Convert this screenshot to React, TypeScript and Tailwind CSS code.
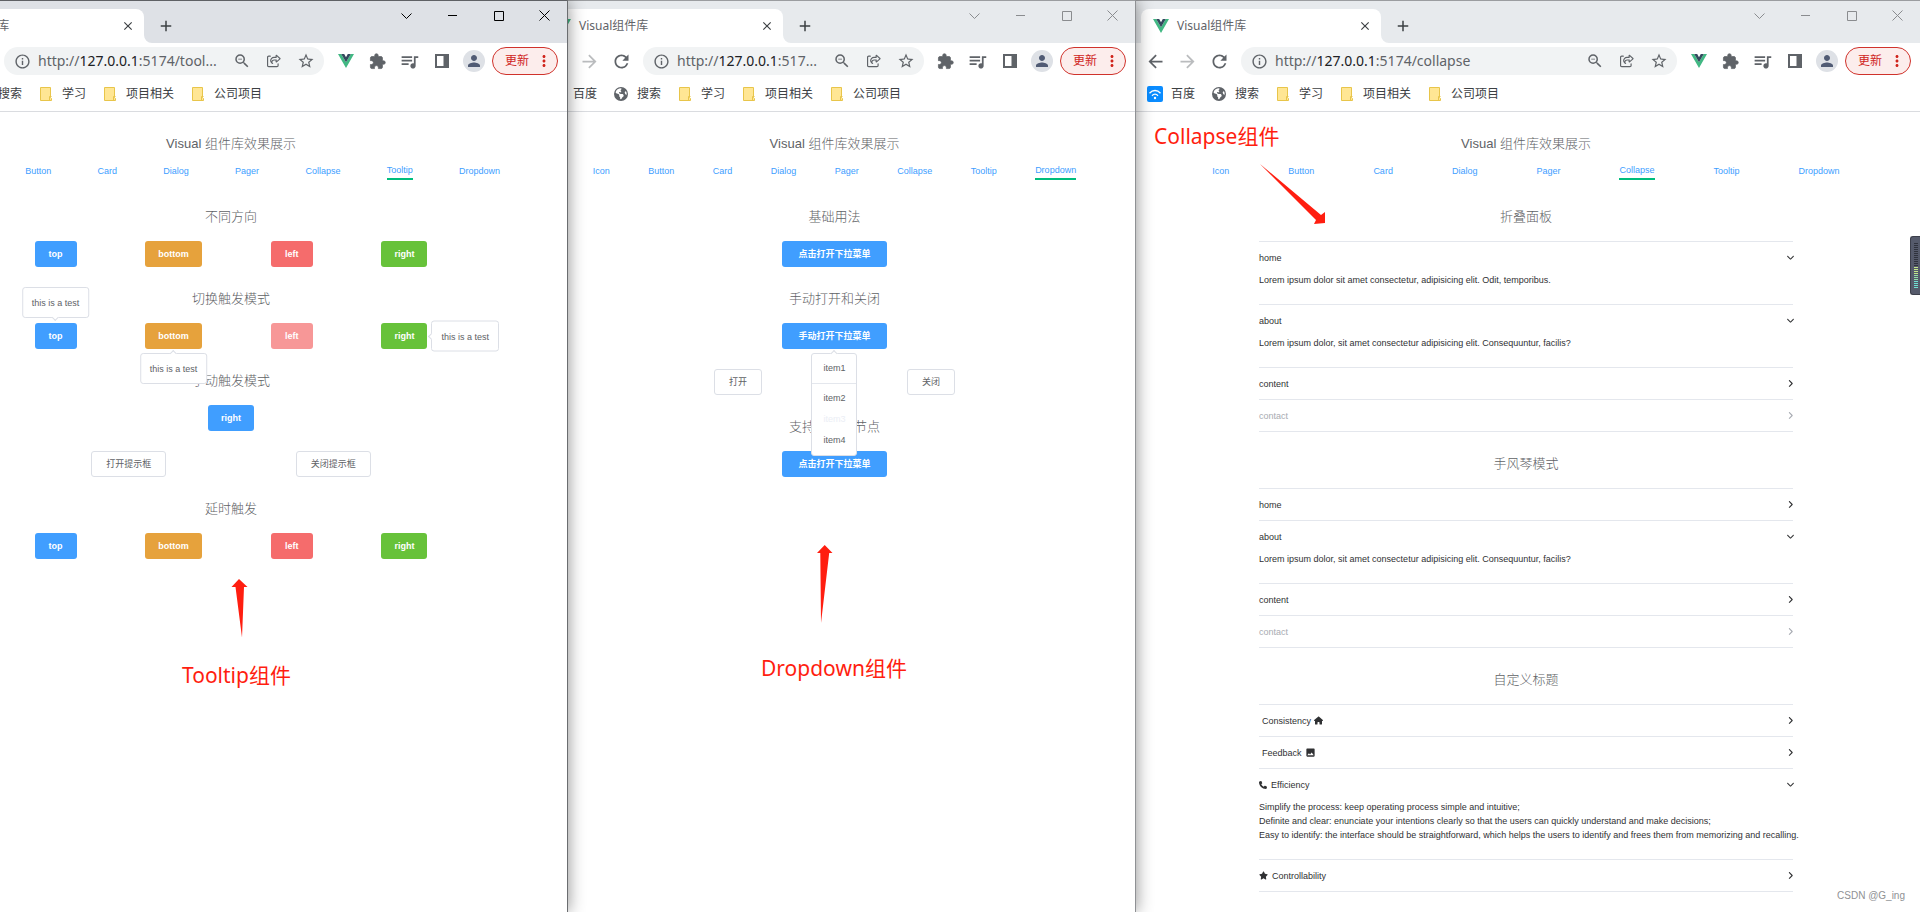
import { useState } from 'react';
import type { ReactNode } from 'react';
import clsx from 'clsx';
import {
  MdArrowBack,
  MdArrowForward,
  MdRefresh,
  MdInfoOutline,
  MdStarBorder,
  MdOutlineZoomOut,
  MdQueueMusic,
  MdPerson,
  MdMoreVert,
  MdClose,
  MdAdd,
  MdImage,
} from 'react-icons/md';
import { FaRegShareFromSquare, FaEarthAmericas, FaHouse, FaPhone, FaStar, FaAngleRight } from 'react-icons/fa6';

const NAV_ITEMS = ['Icon', 'Button', 'Card', 'Dialog', 'Pager', 'Collapse', 'Tooltip', 'Dropdown'];

/* ---------- Icons ---------- */

function VueLogo() {
  return (
    <svg width="16" height="14" viewBox="0 0 16 14" className="shrink-0" aria-hidden="true">
      <path d="M0 0h3.2L8 8.3 12.8 0H16L8 14z" fill="#41b883" />
      <path d="M3.2 0h3L8 3.2 9.8 0h3L8 8.3z" fill="#34495e" />
    </svg>
  );
}

function FolderIcon() {
  return (
    <svg width="16" height="16" viewBox="0 0 16 16" aria-hidden="true">
      <path d="M2.5 1.5h10v10l1 1v2h-11z" fill="#ffe694" stroke="#e8c54a" />
      <path d="M11.5 14v-3.5h2" fill="none" stroke="#e8c54a" />
    </svg>
  );
}

function WifiIcon() {
  return (
    <svg width="16" height="16" viewBox="0 0 16 16" aria-hidden="true">
      <rect width="16" height="16" rx="2" fill="#0a8cff" />
      <path d="M2.5 7.2c3.2-3.6 7.8-3.6 11 0M5 9.7c1.8-2 4.2-2 6 0" fill="none" stroke="#fff" strokeWidth="1.3" />
      <circle cx="8" cy="12" r="1.2" fill="#fff" />
    </svg>
  );
}

function PuzzleIcon() {
  return (
    <svg width="17" height="17" viewBox="0 0 24 24" fill="currentColor" stroke="currentColor" aria-hidden="true">
      <path d="M20.5 11H19V7c0-1.1-.9-2-2-2h-4V3.5a2.5 2.5 0 0 0-5 0V5H4c-1.1 0-1.99.9-1.99 2v3.8H3.5c1.49 0 2.7 1.21 2.7 2.7s-1.21 2.7-2.7 2.7H2V20c0 1.1.9 2 2 2h3.8v-1.5c0-1.49 1.21-2.7 2.7-2.7s2.7 1.21 2.7 2.7V22H17c1.1 0 2-.9 2-2v-4h1.5a2.5 2.5 0 0 0 0-5z" />
    </svg>
  );
}

function SidePanelIcon() {
  return (
    <svg width="14" height="14" viewBox="0 0 14 14" aria-hidden="true">
      <path d="M0 0h14v14H0zM2 2v10h6.5V2z" fill="#5f6368" fillRule="evenodd" />
    </svg>
  );
}

/* ---------- Browser window ---------- */

interface BrowserWindowProps {
  active?: boolean;
  path: string;
  vueExtension?: boolean;
  className: string;
  innerClassName?: string;
  overlay?: ReactNode;
  children: ReactNode;
}

function IconButton({ label, children }: { label: string; children: ReactNode }) {
  return (
    <button type="button" aria-label={label} className="flex h-7 w-8 shrink-0 items-center justify-center">
      {children}
    </button>
  );
}

function WindowControls({ active }: { active?: boolean }) {
  const paths = [
    { label: 'Tab search', d: 'M2.5 5.5l5 5 5-5' },
    { label: 'Minimize', d: 'M3 7.5h9' },
    { label: 'Maximize', d: 'M3.5 3.5h9v9h-9z' },
    { label: 'Close', d: 'M2.5 2.5l10 10M12.5 2.5l-10 10' },
  ];
  return (
    <div className={clsx('flex', active ? 'text-black' : 'text-[#8a8c8f]')}>
      {paths.map(({ label, d }) => (
        <button key={label} type="button" aria-label={label} className="flex h-7 w-[46px] items-center justify-center">
          <svg width="15" height="15" viewBox="0 0 15 15" fill="none" stroke="currentColor">
            <path d={d} />
          </svg>
        </button>
      ))}
    </div>
  );
}

function BrowserWindow({ active, path, vueExtension, className, innerClassName, overlay, children }: BrowserWindowProps) {
  return (
    <section className={clsx('relative min-w-0 shadow-[0_0_16px_rgba(0,0,0,0.45)]', className)}>
      <div
        className={clsx(
          'flex h-full overflow-hidden border-t bg-white',
          active ? 'border-t-[#5f6165]' : 'border-t-[#9b9da0]'
        )}
      >
        <div className={clsx('min-w-0 flex-1', innerClassName)}>
          {/* Tab strip */}
          <div className={clsx('flex h-[42px] justify-between pl-[5px]', active ? 'bg-[#dee1e6]' : 'bg-[#e7eaed]')}>
            <div className="flex items-end">
              <div className="relative flex h-[34px] w-60 items-center rounded-t-lg bg-white pr-2 pl-3">
                <VueLogo />
                <span className="ml-2 flex-1 text-xs text-[#5f6368]">Visual组件库</span>
                <button type="button" aria-label="Close tab" className="flex size-4 items-center justify-center text-[#3c4043]">
                  <MdClose size={14} />
                </button>
                <svg className="absolute bottom-0 left-full" width="8" height="8" viewBox="0 0 8 8" aria-hidden="true">
                  <path d="M0 0v8h8a8 8 0 0 1-8-8z" fill="#fff" />
                </svg>
              </div>
              <button type="button" aria-label="New tab" className="ml-3 flex h-[34px] w-5 items-center justify-center text-[#3c4043]">
                <MdAdd size={18} />
              </button>
            </div>
            <WindowControls active={active} />
          </div>

          {/* Toolbar */}
          <div className="flex h-9 items-center pr-[9px] pl-[3px] text-[#5f6368]">
            <IconButton label="Back">
              <MdArrowBack size={21} />
            </IconButton>
            <IconButton label="Forward">
              <MdArrowForward size={21} className="text-[#babcbe]" />
            </IconButton>
            <IconButton label="Reload">
              <MdRefresh size={21} />
            </IconButton>
            <div className="mx-1.5 flex h-7 min-w-0 flex-1 items-center rounded-full bg-[#f1f3f4] pr-0.5 pl-2.5">
              <MdInfoOutline size={17} className="shrink-0" />
              <span className="ml-[7px] min-w-0 flex-1 overflow-hidden text-sm whitespace-nowrap">
                http://<span className="text-[#202124]">127.0.0.1</span>
                {path}
              </span>
              <IconButton label="Zoom out">
                <MdOutlineZoomOut size={18} />
              </IconButton>
              <IconButton label="Share">
                <FaRegShareFromSquare size={14} />
              </IconButton>
              <IconButton label="Bookmark">
                <MdStarBorder size={18} />
              </IconButton>
            </div>
            {vueExtension && (
              <IconButton label="Vue devtools">
                <VueLogo />
              </IconButton>
            )}
            <IconButton label="Extensions">
              <PuzzleIcon />
            </IconButton>
            <IconButton label="Media">
              <MdQueueMusic size={21} />
            </IconButton>
            <IconButton label="Side panel">
              <SidePanelIcon />
            </IconButton>
            <IconButton label="Profile">
              <span className="flex size-[22px] items-center justify-center rounded-full bg-[#dee1e6] text-[#505b74]">
                <MdPerson size={18} />
              </span>
            </IconButton>
            <button
              type="button"
              className="ml-0.5 flex h-7 shrink-0 items-center rounded-full border border-[#d0322b] bg-[#fcedec] pr-1 pl-3 text-xs text-[#d0241c]"
            >
              更新
              <MdMoreVert size={18} className="ml-1.5" />
            </button>
          </div>

          {/* Bookmarks */}
          <div className="flex h-[33px] items-start gap-4 border-b border-[#dadce0] pt-[7px] pl-[11px] text-xs text-[#3c4043]">
            {[
              { name: '百度', icon: <WifiIcon /> },
              { name: '搜索', icon: <FaEarthAmericas size={14} className="mx-px text-[#5f6368]" /> },
              { name: '学习', icon: <FolderIcon /> },
              { name: '项目相关', icon: <FolderIcon /> },
              { name: '公司项目', icon: <FolderIcon /> },
            ].map(({ name, icon }) => (
              <a key={name} href="#" className="flex shrink-0 items-center gap-2">
                {icon}
                {name}
              </a>
            ))}
          </div>

          {children}
        </div>
      </div>
      {overlay}
    </section>
  );
}

/* ---------- Demo page ---------- */

function DemoPage({ current, children }: { current: string; children: ReactNode }) {
  return (
    <div className='pt-5 pr-1 font-["Liberation_Sans","Noto_Sans_CJK_SC",sans-serif] text-[9px] leading-[14px] text-[#303133]'>
      <h1 className="text-center text-[13px] leading-6 font-light text-[#606266]">Visual 组件库效果展示</h1>
      <nav className="mx-[6%] mt-1.5 flex justify-around">
        {NAV_ITEMS.map((item) => (
          <a
            key={item}
            href="#"
            className={clsx(
              'flex h-[18px] items-center text-[#409eff]',
              item === current && 'border-b-2 border-[#00bd7e]'
            )}
          >
            {item}
          </a>
        ))}
      </nav>
      <div className="mx-[6%] mt-[25px] flex flex-col gap-5">{children}</div>
    </div>
  );
}

function DemoSection({ title, children }: { title: string; children: ReactNode }) {
  return (
    <section className="flex flex-col items-center">
      <h2 className="mb-3 text-[13px] leading-6 font-light text-[#606266]">{title}</h2>
      {children}
    </section>
  );
}

const BUTTON_TYPES = {
  primary: 'bg-[#409eff] font-bold text-white px-[13px]',
  wide: 'bg-[#409eff] font-bold text-white px-4',
  warning: 'bg-[#e6a23c] font-bold text-white px-[13px]',
  danger: 'bg-[#f56c6c] font-bold text-white px-[13px]',
  success: 'bg-[#67c23a] font-bold text-white px-[13px]',
  plain: 'border border-[#dcdfe6] bg-white text-[#606266] px-3.5',
};

interface ButtonProps {
  type?: keyof typeof BUTTON_TYPES;
  disabled?: boolean;
  children: ReactNode;
}

function Button({ type = 'plain', disabled, children }: ButtonProps) {
  return (
    <button
      type="button"
      disabled={disabled}
      className={clsx(
        'flex h-[26px] min-w-[42px] items-center justify-center rounded-[3px]',
        BUTTON_TYPES[type],
        disabled && 'opacity-70'
      )}
    >
      {children}
    </button>
  );
}

const TIP_PLACEMENT = {
  top: 'bottom-full left-1/2 -translate-x-1/2 mb-[5px]',
  bottom: 'top-full left-1/2 -translate-x-1/2 mt-1',
  right: 'left-full top-1/2 -translate-y-1/2 ml-1',
};

const ARROW_PLACEMENT = {
  top: 'top-full left-1/2 -translate-x-1/2 -mt-0.5 border-r border-b',
  bottom: 'bottom-full left-1/2 -translate-x-1/2 -mb-0.5 border-t border-l',
  right: 'right-full top-1/2 -translate-y-1/2 -mr-0.5 border-b border-l',
};

function Tooltip({ placement, children }: { placement: keyof typeof TIP_PLACEMENT; children: ReactNode }) {
  return (
    <div className="relative">
      {children}
      <div
        role="tooltip"
        className={clsx(
          'absolute z-10 flex h-[31px] items-center rounded-[3px] border border-[#dcdfe6] bg-white px-[9px] whitespace-nowrap text-[#606266]',
          TIP_PLACEMENT[placement]
        )}
      >
        this is a test
        <span className={clsx('absolute size-[5px] rotate-45 border-[#dcdfe6] bg-white', ARROW_PLACEMENT[placement])} />
      </div>
    </div>
  );
}

function DirectionButtons() {
  return (
    <div className="flex w-[79%] justify-around">
      <Button type="primary">top</Button>
      <Button type="warning">bottom</Button>
      <Button type="danger">left</Button>
      <Button type="success">right</Button>
    </div>
  );
}

function DropdownMenu() {
  return (
    <div className="absolute top-full left-1/2 z-10 mt-1 w-[46px] -translate-x-1/2 rounded-[3px] border border-[#dcdfe6] bg-white py-1 text-center leading-[21px] text-[#606266]">
      <span className="absolute bottom-full left-1/2 -mb-0.5 size-[5px] -translate-x-1/2 rotate-45 border-t border-l border-[#dcdfe6] bg-white" />
      <ul>
        <li>item1</li>
        <li className="my-1 border-t border-[#e4e7ed]" />
        <li>item2</li>
        <li className="text-[#ebeef5]">item3</li>
        <li>item4</li>
      </ul>
    </div>
  );
}

interface CollapseItem {
  name: string;
  title?: ReactNode;
  content?: ReactNode;
  disabled?: boolean;
}

interface CollapseProps {
  items: CollapseItem[];
  defaultOpen: string[];
  accordion?: boolean;
}

function Collapse({ items, defaultOpen, accordion }: CollapseProps) {
  const [open, setOpen] = useState(defaultOpen);

  const toggle = (name: string) => {
    if (open.includes(name)) {
      setOpen(open.filter((n) => n !== name));
    } else {
      setOpen(accordion ? [name] : [...open, name]);
    }
  };

  return (
    <div className="w-7/9 border-t border-[#e4e7ed]">
      {items.map(({ name, title, content, disabled }) => {
        const isOpen = open.includes(name);
        return (
          <div key={name} className="border-b border-[#e4e7ed]">
            <button
              type="button"
              disabled={disabled}
              aria-expanded={isOpen}
              onClick={() => toggle(name)}
              className="flex h-[31px] w-full items-center justify-between disabled:text-[#a8abb2]"
            >
              {title ?? name}
              <FaAngleRight size={9} className={clsx('-mr-0.5', isOpen && 'rotate-90')} />
            </button>
            {isOpen && <div className="pb-[17px]">{content}</div>}
          </div>
        );
      })}
    </div>
  );
}

const BASIC_ITEMS: CollapseItem[] = [
  { name: 'home', content: 'Lorem ipsum dolor sit amet consectetur, adipisicing elit. Odit, temporibus.' },
  { name: 'about', content: 'Lorem ipsum dolor, sit amet consectetur adipisicing elit. Consequuntur, facilis?' },
  { name: 'content' },
  { name: 'contact', disabled: true },
];

const CUSTOM_ITEMS: CollapseItem[] = [
  {
    name: 'consistency',
    title: (
      <span className="flex items-center gap-[3px] pl-[3px]">
        Consistency <FaHouse size={9} />
      </span>
    ),
  },
  {
    name: 'feedback',
    title: (
      <span className="flex items-center gap-[3px] pl-[3px]">
        Feedback <MdImage size={11} />
      </span>
    ),
  },
  {
    name: 'efficiency',
    title: (
      <span className="flex items-center gap-1">
        <FaPhone size={8} /> Efficiency
      </span>
    ),
    content: (
      <div className="whitespace-nowrap">
        <p>Simplify the process: keep operating process simple and intuitive;</p>
        <p>Definite and clear: enunciate your intentions clearly so that the users can quickly understand and make decisions;</p>
        <p>
          Easy to identify: the interface should be straightforward, which helps the users to identify and frees them from
          memorizing and recalling.
        </p>
      </div>
    ),
  },
  {
    name: 'controllability',
    title: (
      <span className="flex items-center gap-1">
        <FaStar size={9} /> Controllability
      </span>
    ),
  },
];

/* ---------- Annotations ---------- */

function Note({ className, children }: { className: string; children: ReactNode }) {
  return (
    <p className={clsx('absolute z-20 text-[21px] leading-7 whitespace-nowrap text-[#ff1e10]', className)}>{children}</p>
  );
}

function VolumeMeter() {
  return (
    <div className="absolute top-59 right-0 z-20 flex h-[59px] w-2.5 flex-col items-center gap-px rounded-l-[3px] border border-r-0 border-[#3c3f4b] bg-[#555a6b] pt-1.5">
      {Array.from({ length: 23 }, (_, i) => (
        <span
          key={i}
          className={clsx('h-px w-1', i < 12 ? 'bg-[#2f323d]' : i < 16 ? 'bg-[#c3e88a]' : i < 19 ? 'bg-[#92dda8]' : 'bg-[#6fe0d2]')}
        />
      ))}
    </div>
  );
}

export default function App() {
  return (
    <main className='flex min-h-screen overflow-hidden bg-white font-["Noto_Sans","Noto_Sans_CJK_SC",sans-serif]'>
      <BrowserWindow
        active
        path=":5174/tool..."
        vueExtension
        className="z-30 flex-[567] border-r border-[#6b6d70]"
        innerClassName="-ml-[101px]"
        overlay={
          <>
            <svg className="absolute top-[579px] left-[231px]" width="17" height="59" viewBox="0 0 17 59" aria-hidden="true">
              <path d="M8 0l8.5 8H13l-2 50.5L4.5 8h-4z" fill="#ff1e10" />
            </svg>
            <Note className="top-[661px] left-[182px]">Tooltip组件</Note>
          </>
        }
      >
        <DemoPage current="Tooltip">
          <DemoSection title="不同方向">
            <DirectionButtons />
          </DemoSection>
          <DemoSection title="切换触发模式">
            <div className="flex w-[79%] justify-around">
              <Tooltip placement="top">
                <Button type="primary">top</Button>
              </Tooltip>
              <Tooltip placement="bottom">
                <Button type="warning">bottom</Button>
              </Tooltip>
              <Button type="danger" disabled>
                left
              </Button>
              <Tooltip placement="right">
                <Button type="success">right</Button>
              </Tooltip>
            </div>
          </DemoSection>
          <DemoSection title="手动触发模式">
            <Button type="primary">right</Button>
            <div className="mt-5 flex w-[70%] justify-around">
              <Button>打开提示框</Button>
              <Button>关闭提示框</Button>
            </div>
          </DemoSection>
          <DemoSection title="延时触发">
            <DirectionButtons />
          </DemoSection>
        </DemoPage>
      </BrowserWindow>

      <BrowserWindow
        path=":517..."
        className="z-10 flex-[567] border-r border-[#8f9194]"
        innerClassName="-ml-[30px]"
        overlay={
          <>
            <svg className="absolute top-[545px] left-[249px]" width="16" height="78" viewBox="0 0 16 78" aria-hidden="true">
              <path d="M7.7 0l7.8 8h-3.3L4 78 3.3 8H0z" fill="#ff1e10" />
            </svg>
            <Note className="top-[654px] left-[193px]">Dropdown组件</Note>
          </>
        }
      >
        <DemoPage current="Dropdown">
          <DemoSection title="基础用法">
            <Button type="wide">点击打开下拉菜单</Button>
          </DemoSection>
          <DemoSection title="手动打开和关闭">
            <div className="relative">
              <Button type="wide">手动打开下拉菜单</Button>
              <DropdownMenu />
            </div>
            <div className="mt-5 flex w-[74%] justify-around">
              <Button>打开</Button>
              <Button>关闭</Button>
            </div>
          </DemoSection>
          <DemoSection title="支持自定义节点">
            <Button type="wide">点击打开下拉菜单</Button>
          </DemoSection>
        </DemoPage>
      </BrowserWindow>

      <BrowserWindow
        path=":5174/collapse"
        vueExtension
        className="flex-[784]"
        overlay={
          <>
            <Note className="top-[122px] left-[18px]">Collapse组件</Note>
            <svg className="absolute top-[164px] left-[124px]" width="66" height="60" viewBox="0 0 66 60" aria-hidden="true">
              <path d="M0 0l61 51 4-3v11l-11 1 2-4z" fill="#ff1e10" />
            </svg>
            <VolumeMeter />
            <p className='absolute right-[15px] bottom-2 font-["Liberation_Sans",sans-serif] text-[10px] leading-4 text-[#8f9194]'>
              CSDN @G_ing
            </p>
          </>
        }
      >
        <DemoPage current="Collapse">
          <DemoSection title="折叠面板">
            <Collapse items={BASIC_ITEMS} defaultOpen={['home', 'about']} />
          </DemoSection>
          <DemoSection title="手风琴模式">
            <Collapse items={BASIC_ITEMS} defaultOpen={['about']} accordion />
          </DemoSection>
          <DemoSection title="自定义标题">
            <Collapse items={CUSTOM_ITEMS} defaultOpen={['efficiency']} />
          </DemoSection>
        </DemoPage>
      </BrowserWindow>
    </main>
  );
}
